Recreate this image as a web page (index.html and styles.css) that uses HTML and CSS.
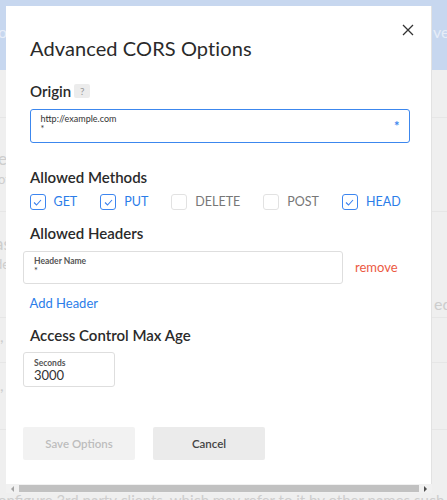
FILE: index.html
```html
<!DOCTYPE html>
<html>
<head>
<meta charset="utf-8">
<link rel="stylesheet" href="styles.css">
</head>
<body>
<div class="page">
  <div class="bg">
    <div class="bg-band">
      <span class="bg-left band-l">o</span>
      <span class="bg-right band-r">vents</span>
    </div>
    <div class="bg-row h48"></div>
    <div class="bg-row h94">
      <div class="bg-left col">
        <span class="big">e</span>
        <span class="small">ot</span>
      </div>
    </div>
    <div class="bg-row h106">
      <div class="bg-left col pad-as">
        <span class="big">as</span>
        <span class="small">de</span>
      </div>
      <span class="bg-right pad-edc">ed CORS</span>
    </div>
    <div class="bg-row h45"><span class="bg-right pad-30a">, 3000</span></div>
    <div class="bg-row h67"><span class="bg-right pad-30b">, 3000</span></div>
    <div class="bg-row h60"></div>
    <div class="bg-foot">onfigure 3rd party clients, which may refer to it by other names such as the S3 Endpoint or S3</div>
  </div>

  <div class="modal">
    <button class="close" aria-label="Close">
      <svg width="12" height="12" viewBox="0 0 12 12"><path d="M1 1 L11 11 M11 1 L1 11" stroke="#333" stroke-width="1.3" fill="none"/></svg>
    </button>
    <h1 class="title">Advanced CORS Options</h1>

    <div class="section-head origin-head"><h2>Origin</h2><span class="help">?</span></div>
    <div class="field field-origin focused">
      <div class="field-text">
        <div class="field-label light">http://example.com</div>
        <div class="field-value tiny">*</div>
      </div>
      <span class="req">*</span>
    </div>

    <div class="section-head methods-head"><h2>Allowed Methods</h2></div>
    <div class="methods">
      <label class="method on"><span class="box"><svg width="9" height="7" viewBox="0 0 9 7"><path d="M1 3.5 L3.5 6 L8 1" stroke="#3b82f0" stroke-width="1.1" fill="none"/></svg></span>GET</label>
      <label class="method on"><span class="box"><svg width="9" height="7" viewBox="0 0 9 7"><path d="M1 3.5 L3.5 6 L8 1" stroke="#3b82f0" stroke-width="1.1" fill="none"/></svg></span>PUT</label>
      <label class="method"><span class="box"></span>DELETE</label>
      <label class="method"><span class="box"></span>POST</label>
      <label class="method on"><span class="box"><svg width="9" height="7" viewBox="0 0 9 7"><path d="M1 3.5 L3.5 6 L8 1" stroke="#3b82f0" stroke-width="1.1" fill="none"/></svg></span>HEAD</label>
    </div>

    <div class="section-head headers-head"><h2>Allowed Headers</h2></div>
    <div class="header-row">
      <div class="field field-header">
        <div class="field-text">
          <div class="field-label">Header Name</div>
          <div class="field-value tiny">*</div>
        </div>
      </div>
      <a class="remove">remove</a>
    </div>
    <a class="add-header">Add Header</a>

    <div class="section-head age-head"><h2>Access Control Max Age</h2></div>
    <div class="field field-seconds">
      <div class="field-text">
        <div class="field-label">Seconds</div>
        <div class="field-value">3000</div>
      </div>
    </div>

    <div class="actions">
      <button class="btn btn-disabled">Save Options</button>
      <button class="btn btn-cancel">Cancel</button>
    </div>
  </div>

  <div class="hscroll">
    <span class="arrow left"></span>
    <span class="thumb"></span>
    <span class="arrow right"></span>
  </div>
</div>
</body>
</html>
```

FILE: styles.css
```css
* { box-sizing: border-box; }
html, body { margin: 0; padding: 0; }
body {
  width: 447px;
  height: 500px;
  overflow: hidden;
  font-family: "Lato", "Open Sans", Arial, sans-serif;
  color: #222;
}
.page { position: relative; width: 447px; height: 500px; overflow: hidden; background: #efefef; }

/* background page */
.bg { display: flex; flex-direction: column; width: 447px; }
.bg-band {
  height: 70px;
  background: #c7d7ef;
  display: flex;
  justify-content: space-between;
  align-items: flex-start;
  padding-top: 22px;
  font-size: 16px;
  color: #e6edf8;
}
.band-l { margin-left: -3px; }
.bg-row {
  display: flex;
  justify-content: space-between;
  align-items: flex-start;
  border-bottom: 1px solid #e6e6e6;
  color: #cdcdcd;
  font-size: 16px;
}
.h48 { height: 48px; }
.h94 { height: 94px; }
.h106 { height: 106px; }
.h45 { height: 45px; }
.h67 { height: 67px; }
.h60 { height: 60px; border-bottom: none; }
.bg-left { margin-left: -2px; }
.col { display: flex; flex-direction: column; }
.h94 .col { padding-top: 31px; }
.big { font-size: 17px; line-height: 20px; }
.small { font-size: 13px; line-height: 20px; }
.pad-as { padding-top: 22px; margin-left: -5px; }
.bg-right { width: 13px; overflow: hidden; white-space: nowrap; }
.band-r { width: 14px; }
.pad-edc { padding-top: 82px; }
.pad-30a { padding-top: 8px; }
.pad-30b { padding-top: 12px; }
.bg-foot {
  white-space: nowrap;
  font-size: 15px;
  color: #cdcdcd;
  margin-left: -2px;
  margin-top: 1px;
}

/* modal */
.modal {
  position: absolute;
  left: 6px;
  top: 6px;
  width: 426px;
  height: 478px;
  background: #fff;
  border-right: 1px solid #e2e2e2;
  padding: 30px 0 0 17px;
  display: flex;
  flex-direction: column;
  align-items: flex-start;
}
.close {
  position: absolute;
  right: 17px;
  top: 18px;
  width: 12px;
  height: 12px;
  padding: 0;
  border: 0;
  background: none;
  display: flex;
}
.title {
  margin: 0 0 0 7px;
  font-size: 20px;
  line-height: 24px;
  font-weight: 400;
  color: #2a2a2a;
  letter-spacing: 0.1px;
}
.section-head {
  display: flex;
  align-items: center;
  gap: 3px;
  height: 20px;
  margin-left: 7px;
}
.section-head h2 {
  margin: 0;
  font-size: 15px;
  line-height: 20px;
  font-weight: 600;
  color: #2a2a2a;
}
.origin-head { margin-top: 21px; }
.help {
  width: 16px;
  height: 14px;
  background: #ececec;
  border-radius: 2px;
  color: #999;
  font-size: 10px;
  line-height: 14px;
  text-align: center;
}
.field {
  display: flex;
  align-items: center;
  border: 1px solid #dedede;
  border-radius: 3px;
  background: #fff;
}
.field-text { display: flex; flex-direction: column; align-self: flex-start; }
.field-label { font-size: 8.5px; line-height: 10px; font-weight: 700; color: #555; }
.field-label.light { font-weight: 400; color: #333; font-size: 9px; }
.field-value { font-size: 13px; line-height: 14px; color: #333; }
.field-value.tiny { font-size: 9px; line-height: 10px; }
.field-origin {
  margin: 8px 0 0 6.5px;
  width: 380px;
  height: 34px;
  padding: 4px 9px 0 10px;
  justify-content: space-between;
}
.focused { border: 1.5px solid #3c87ee; }
.req { color: #3c87ee; font-size: 13px; font-weight: 700; line-height: 10px; margin-top: -5px; }

.methods-head { margin-top: 24px; }
.methods {
  display: flex;
  gap: 23px;
  margin: 7px 0 0 6.5px;
  height: 16px;
}
.method {
  display: flex;
  align-items: center;
  gap: 8px;
  font-size: 12.5px;
  color: #777;
  line-height: 16px;
}
.method.on { color: #2b7de9; }
.box {
  width: 16px;
  height: 16px;
  border: 1px solid #e2e2e2;
  border-radius: 3px;
  display: flex;
  align-items: center;
  justify-content: center;
}
.method.on .box { border-color: #3d86f0; }

.headers-head { margin-top: 13px; }
.header-row {
  display: flex;
  align-items: center;
  gap: 12px;
  margin-top: 8px;
}
.field-header {
  width: 320px;
  height: 33px;
  padding: 4px 10px 0 10px;
}
.remove { color: #ec5a43; font-size: 13px; line-height: 16px; margin-top: -2px; }
.add-header {
  margin: 11px 0 0 6.5px;
  color: #2b7de9;
  font-size: 13px;
  line-height: 16px;
}
.age-head { margin-top: 14px; }
.field-seconds {
  margin-top: 7px;
  width: 92px;
  height: 35px;
  padding: 5px 10px 0 10px;
}
.actions {
  display: flex;
  gap: 18px;
  margin-top: 40px;
}
.btn {
  width: 112px;
  height: 33px;
  border: 0;
  border-radius: 2px;
  font-family: "Lato", "Open Sans", Arial, sans-serif;
  font-size: 11.5px;
  font-weight: 600;
}
.btn-disabled { background: #f2f2f2; color: #bdbdbd; }
.btn-cancel { background: #ebebeb; color: #444; }

/* scrollbar */
.hscroll {
  position: absolute;
  left: 6px;
  top: 484px;
  width: 426px;
  height: 9px;
  background: #f1f1f1;
  display: flex;
  align-items: center;
  padding: 0 3px;
  gap: 3px;
}
.thumb { flex: 1; height: 7px; background: #c1c1c1; }
.arrow { width: 0; height: 0; border-top: 3px solid transparent; border-bottom: 3px solid transparent; }
.arrow.left { border-right: 3px solid #a3a3a3; margin: 0 2px; }
.arrow.right { border-left: 3px solid #505050; margin: 0 2px; }
```
